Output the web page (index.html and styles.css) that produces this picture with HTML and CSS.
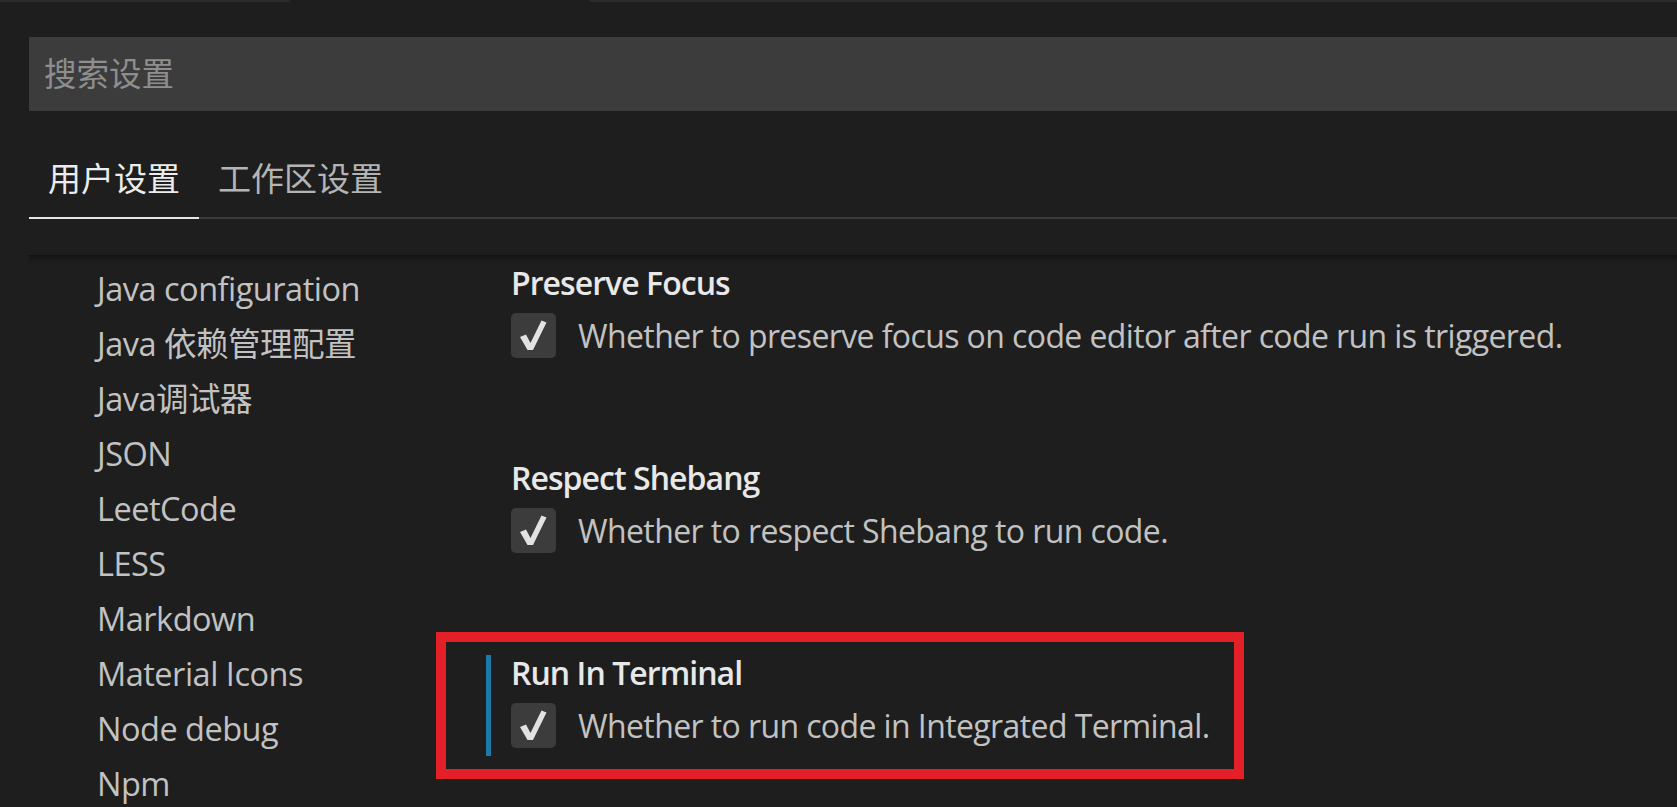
FILE: index.html
```html
<!DOCTYPE html>
<html lang="zh-CN">
<head>
  <meta charset="UTF-8">
  <meta name="viewport" content="width=device-width, initial-scale=1">
  <title>设置</title>
  <link rel="stylesheet" href="styles.css">
</head>
<body>
  <div class="topstrip"><span class="seg seg-a"></span><span class="seg seg-b"></span></div>

  <header class="head">
    <div class="search">搜索设置</div>
    <nav class="tabs">
      <div class="tab active">用户设置</div>
      <div class="tab">工作区设置</div>
    </nav>
  </header>

  <main class="content">
    <ul class="toc">
      <li>Java configuration</li>
      <li>Java 依赖管理配置</li>
      <li>Java调试器</li>
      <li>JSON</li>
      <li>LeetCode</li>
      <li>LESS</li>
      <li>Markdown</li>
      <li>Material Icons</li>
      <li>Node debug</li>
      <li>Npm</li>
    </ul>

    <section class="settings">
      <div class="setting">
        <div class="title">Preserve Focus</div>
        <div class="row">
          <span class="checkbox"><svg viewBox="0 0 45 45" width="45" height="45"><path d="M9 24 L15 21.5 L19.5 30 L30.5 7.5 L35.5 9.5 L22 37 L16.5 37 Z"/></svg></span>
          <span class="desc">Whether to preserve focus on code editor after code run is triggered.</span>
        </div>
      </div>

      <div class="setting">
        <div class="title">Respect Shebang</div>
        <div class="row">
          <span class="checkbox"><svg viewBox="0 0 45 45" width="45" height="45"><path d="M9 24 L15 21.5 L19.5 30 L30.5 7.5 L35.5 9.5 L22 37 L16.5 37 Z"/></svg></span>
          <span class="desc">Whether to respect Shebang to run code.</span>
        </div>
      </div>

      <div class="setting modified">
        <div class="title">Run In Terminal</div>
        <div class="row">
          <span class="checkbox"><svg viewBox="0 0 45 45" width="45" height="45"><path d="M9 24 L15 21.5 L19.5 30 L30.5 7.5 L35.5 9.5 L22 37 L16.5 37 Z"/></svg></span>
          <span class="desc">Whether to run code in Integrated Terminal.</span>
        </div>
        <div class="mark"></div>
      </div>
    </section>
  </main>
</body>
</html>
```

FILE: styles.css
```css
html, body {
  margin: 0;
  height: 807px;
  overflow: hidden;
}
body {
  background: #1e1e1e;
  font-family: "Open Sans", "Noto Sans CJK SC", sans-serif;
  font-size: 32px;
  letter-spacing: -0.6px;
  color: #c4c4c4;
}
.topstrip {
  display: flex;
  height: 2px;
}
.seg {
  background: #2b2b2b;
}
.seg-a {
  width: 290px;
}
.seg-b {
  margin-left: 299px;
  flex: 1;
}
.head {
  padding: 35px 0 0 29px;
}
.search {
  height: 74px;
  line-height: 74px;
  background: #3c3c3c;
  color: #8e8e8e;
  padding-left: 15px;
  font-size: 32.5px;
  letter-spacing: 0;
}
.tabs {
  display: flex;
  border-bottom: 2px solid #3a3a3a;
}
.tab {
  padding: 47px 19px 17px;
  line-height: 42px;
  font-size: 33px;
  letter-spacing: 0;
  color: #b4b4b4;
  border-bottom: 2px solid transparent;
  margin-bottom: -2px;
}
.tab.active {
  color: #ececec;
  border-bottom-color: #e6e6e6;
}
.content {
  margin: 36px 0 0 29px;
  display: grid;
  grid-template-columns: 457px 1fr;
  box-shadow: inset 0 7px 6px -6px #0c0c0c;
}
.toc {
  list-style: none;
  margin: 0;
  padding: 6px 0 0 68px;
}
.toc li {
  height: 55px;
  line-height: 55px;
  font-size: 32.5px;
  letter-spacing: -0.5px;
  color: #c2c2c2;
  white-space: nowrap;
}
.settings {
  padding-top: 10px;
}
.setting {
  position: relative;
  padding: 0 0 8px 20px;
  border-left: 5px solid transparent;
  margin-bottom: 94px;
}
.setting:last-child {
  margin-bottom: 0;
}
.setting.modified {
  border-left-color: #1b7aa8;
}
.title {
  line-height: 36px;
  font-weight: 600;
  letter-spacing: -0.95px;
  color: #e8e8e8;
}
.row {
  display: flex;
  align-items: center;
  gap: 22px;
  margin-top: 12px;
  height: 45px;
}
.checkbox {
  width: 45px;
  height: 45px;
  flex: none;
  background: #3c3c3c;
  border-radius: 5px;
}
.checkbox svg {
  display: block;
  fill: #e2e2e2;
}
.desc {
  color: #c2c2c2;
  white-space: nowrap;
}
.mark {
  position: absolute;
  left: -55px;
  top: -23px;
  width: 808px;
  height: 147px;
  box-sizing: border-box;
  border: 10px solid #e31f27;
}
```
